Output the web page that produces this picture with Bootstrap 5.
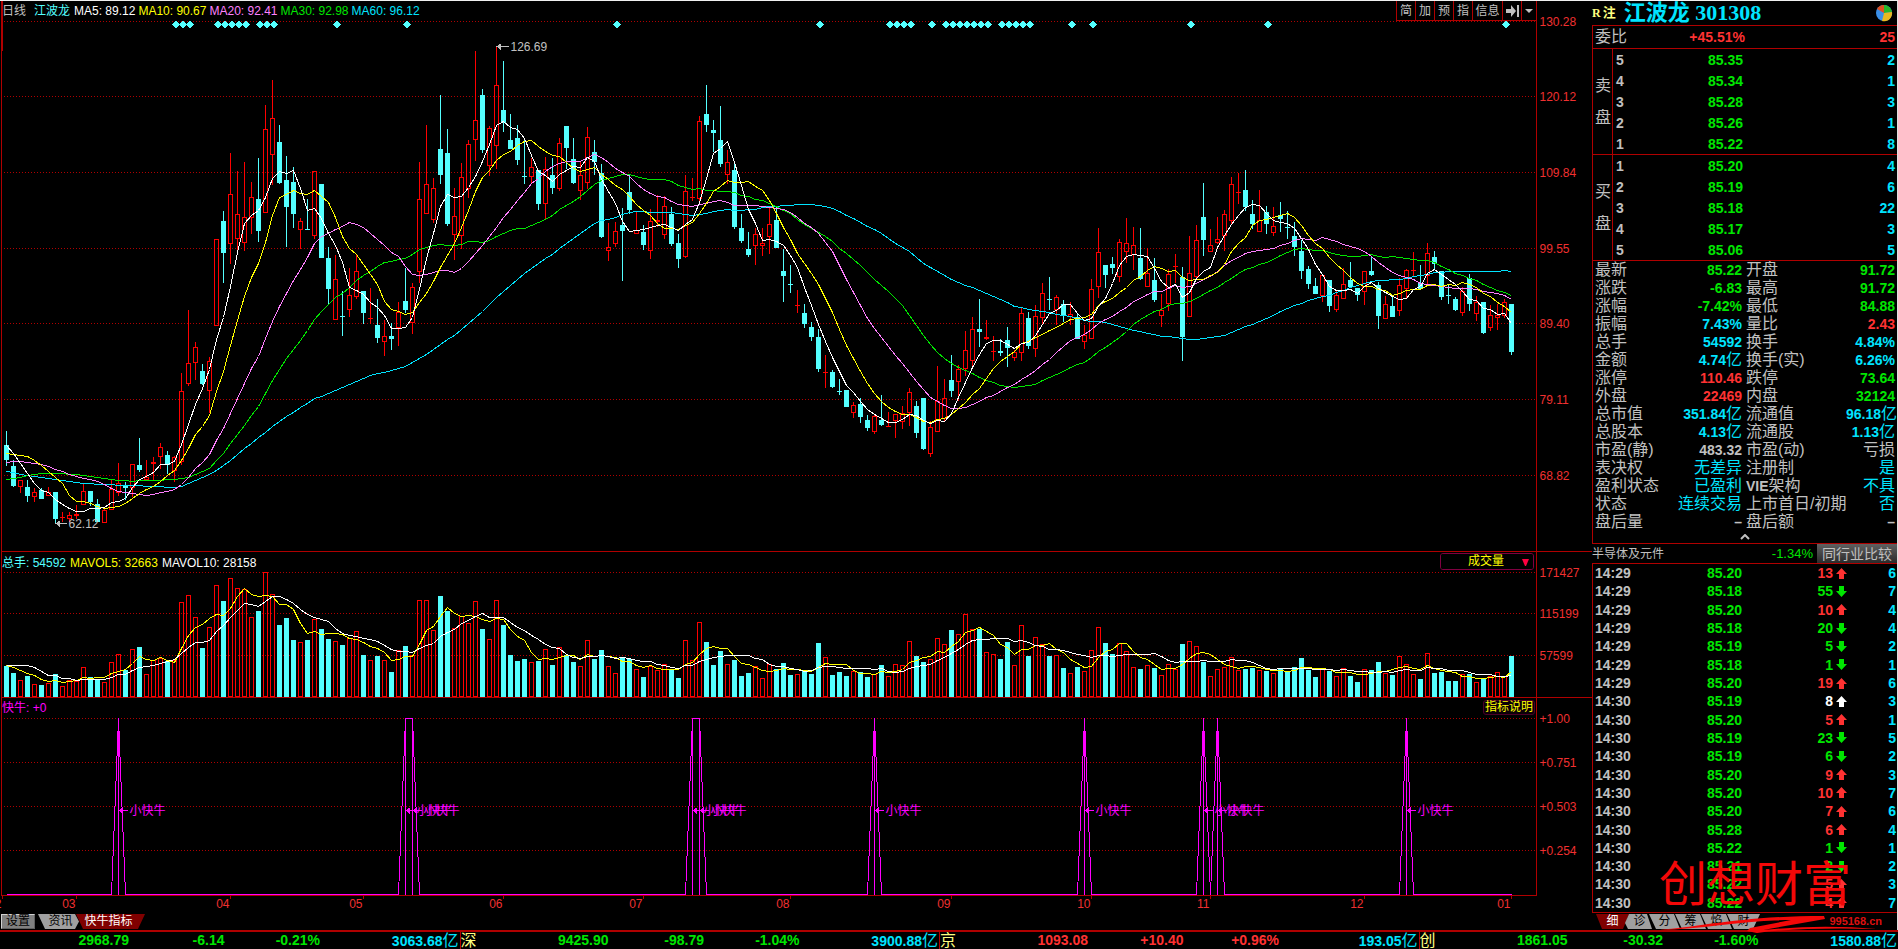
<!DOCTYPE html>
<html lang="zh-CN">
<head>
<meta charset="utf-8">
<meta name="viewport" content="width=device-width, initial-scale=1">
<title>江波龙 301308</title>
<link href="https://cdn.jsdelivr.net/npm/bootstrap@5.3.0/dist/css/bootstrap.min.css" rel="stylesheet">
<style>
:root{--line:#b00000;--up:#ff3232;--dn:#00e600;--cy:#00e4ff;--aqua:#54ffff;--gr:#c0c0c0;--mg:#ff00ff}
body{background:#000;color:var(--gr);font-family:"Liberation Sans","Noto Sans CJK SC",sans-serif;font-size:12px;line-height:16px}
.app{border-top:1px solid #f0f0f0}
.up{color:var(--up)}.dn{color:var(--dn)}.cy{color:var(--cy)}.aqua{color:var(--aqua)}.gr{color:var(--gr)}.wh{color:#fff}.yl{color:#ff0}.pk{color:#ff80ff}.mg{color:var(--mg)}
.charts{border-left:1px solid #000}
.panes{border-left:1px solid var(--line)}
.red-mark{width:2px;height:50px;background:var(--line);left:0;top:0}
.pane-head{margin-right:55px;border-right:1px solid var(--line);flex-shrink:0}
.head-price{height:20px}.head-vol{height:18px}.head-ind{height:16px}
.legend-row{gap:4px;white-space:nowrap}
.head-price .legend-row{gap:3px}
.head-price .gr{margin-right:5px}.head-price .aqua{margin-right:1px}
.head-vol .legend-row,.head-ind .legend-row{padding-top:3px}
.tool-row{height:20px;border-left:1px solid var(--line);border-bottom:1px solid var(--line)}
.tool-row button{width:19px;padding:0;border:0;border-right:1px solid var(--line);background:#000;color:var(--gr);font-size:12px;line-height:18px}
.tool-row button.wide{width:30px}
.tool-row button:last-child{width:14px;border-right:0}
.plot{min-height:0;flex-basis:0}
.plot.p1{flex-grow:531}.plot.p2{flex-grow:128}.plot.p3{flex-grow:182}
.plot svg,.time-axis svg{display:block;width:100%;height:100%;overflow:visible}
.time-axis{height:18px}
svg text{font-size:12px}
.vol-pick{width:94px;height:17px;border:1px solid #800040;border-radius:3px;margin-right:2px;margin-top:1px}
.vol-pick select{display:block;appearance:none;width:100%;height:15px;border:0;border-radius:2px;background:#000;color:#ff0;font-size:12px;line-height:15px;padding:0 0 0 27px;outline:0}
.vol-pick svg{position:absolute;right:4px;top:5px}
.note-btn{border:1px solid #4a0028;border-radius:3px;background:#0c0008;color:#ff0;padding:0 1px;font-size:12px;line-height:13px;height:15px;margin:2px 1px 0 0}
.tab-row{height:16px}
.tab-row button{border:0;padding:0;font-size:12px;line-height:15px;height:15px;background:#a0a0a0;color:#000}
.tab-row .set{width:34px;background:#808080;border:1px solid #d0d0d0;border-right-color:#606060;border-bottom-color:#606060;line-height:13px;margin-right:3px}
.tab-row .news{width:41px;padding-left:4px;clip-path:polygon(0 0,37px 0,41px 50%,37px 100%,7px 100%)}
.tab-row .bull{width:69px;background:#800000;color:#fff;margin-left:-3px;padding-right:4px;clip-path:polygon(0 0,100% 0,62px 100%,7px 100%)}
.side{width:306px;border-right:1px solid #e0e0e0}
.title-row{height:24px}
.stock-name{font:bold 22px/24px "Liberation Serif","Noto Sans CJK SC",serif;color:#00e4ff;margin-left:8px}
.flag-r{font:bold 12px/24px "Liberation Serif",serif;color:#ffff80}
.flag-z{font-size:13px;font-weight:700;color:#ffff80;margin-left:2px}
.frame{border:1px solid var(--line);border-right:0}
.num{font-size:14px;font-weight:700}
.lbl{font-size:16px;font-weight:400}
.side table{table-layout:fixed}
.bid-ratio{height:23px;border-bottom:1px solid var(--line);padding:0 2px}
.bid-ratio span:nth-child(2){width:118px}
.book{border-bottom:1px solid var(--line)}
.book .who{width:20px;flex-shrink:0;border-right:1px solid var(--line);font-size:16px;line-height:32px;padding-left:2px}
.book table td{height:21px;padding:0;line-height:16px}
.book td:nth-child(1){padding-left:3px;width:20px}.book td:nth-child(2){width:110px}.book td:nth-child(3){padding-right:2px}
.quote td{height:18px;line-height:18px;padding:0;white-space:nowrap}
.quote td:nth-child(1){padding-left:2px;width:74px}.quote td:nth-child(2){width:75px}.quote td:nth-child(3){padding-left:4px;width:104px}.quote td:nth-child(4){padding-right:2px}
.fold{height:12px;border:0;background:none;padding:0}
.sector{height:19px}
.sector .rate{font-size:13px}
.sector button{width:80px;height:20px;border:0;padding:0;background:linear-gradient(#606060,#282828);color:var(--gr);font-size:14px;line-height:18px;margin-left:4px}
.ticks{flex:1 1 0;min-height:0}
.ticks td{padding:0;line-height:16px}
.ticks td:nth-child(1){padding-left:2px;width:70px}.ticks td:nth-child(2){width:79px}.ticks td:nth-child(3){width:91px}.ticks td:nth-child(4){padding:0 0 0 3px;width:20px}.ticks td:nth-child(5){padding-right:1px}
.ticks svg{display:block}
.side-tabs{height:17px;padding:1px 0 0 4px}
.side-tabs button{width:31px;margin-right:-5px;clip-path:polygon(0 0,25px 0,100% 100%,7px 100%)}
.side-tabs button.on{width:33px;margin-right:-4px;background:#800000;color:#fff;clip-path:polygon(0 0,100% 0,27px 100%,6px 100%)}
.side-tabs button.first{width:29px;clip-path:polygon(4px 0,22px 0,27px 100%,3px 100%,0 60%)}
.side-tabs button.last{width:33px;clip-path:polygon(0 0,100% 0,26px 100%,7px 100%)}
.brand{right:0;bottom:-3px;width:246px;height:78px;pointer-events:none}
.brand-name{font-size:48px;line-height:60px;color:#f40808;font-weight:400;padding-left:8px;white-space:nowrap}
.brand-swash{left:0;bottom:0;width:240px;height:18px}
.brand-site{right:15px;bottom:4px;font-size:11px;font-weight:700;color:#dc1010}
.ticker{border-top:2px solid var(--line);height:19px;margin-left:-19px;overflow:hidden}
.ticker>div{display:grid;grid-template-columns:31% 20% 20% 29%;flex:1 1 0;border-right:1px solid var(--line);padding-right:1px;line-height:17px;text-align:right;white-space:nowrap}
.ticker>div:last-child{border-right:0}
.ticker .mk{color:#ffff80;font-size:16px}
</style>
</head>
<body class="overflow-hidden">
<div class="app d-flex flex-column vh-100 overflow-hidden">
  <main class="d-flex flex-grow-1">
    <section class="charts d-flex flex-column flex-grow-1 position-relative">
      <div class="red-mark position-absolute"></div>
      <div class="panes d-flex flex-column flex-grow-1">
        <header class="pane-head head-price d-flex justify-content-between">
          <div class="legend-row d-flex align-items-center">
            <span class="gr">日线</span><span class="aqua">江波龙</span><span class="wh">MA5: 89.12</span><span class="yl">MA10: 90.67</span><span class="pk">MA20: 92.41</span><span class="dn">MA30: 92.98</span><span class="cy">MA60: 96.12</span>
          </div>
          <div class="tool-row d-flex">
            <button>简</button><button>加</button><button>预</button><button>指</button><button class="wide">信息</button>
            <button aria-label="下一个"><svg width="13" height="12" viewBox="0 0 13 12"><path d="M0 4h5V0l5 6-5 6V8H0zM11 0h2v12h-2z" fill="#c0c0c0"/></svg></button>
            <button aria-label="更多"><svg width="8" height="4" viewBox="0 0 8 4"><path d="M0 0h8L4 4z" fill="#c0c0c0"/></svg></button>
          </div>
        </header>
        <div class="plot p1"><svg id="price"></svg></div>
        <header class="pane-head head-vol d-flex justify-content-between">
          <div class="legend-row d-flex align-items-center"><span class="aqua">总手: 54592</span><span class="yl">MAVOL5: 32663</span><span class="wh">MAVOL10: 28158</span></div>
          <div class="vol-pick position-relative"><select aria-label="指标"><option>成交量</option></select><svg width="7" height="7" viewBox="0 0 7 7"><path d="M0 0h7L4 7H3z" fill="#ff0040"/></svg></div>
        </header>
        <div class="plot p2"><svg id="volume"></svg></div>
        <header class="pane-head head-ind d-flex justify-content-between">
          <div class="legend-row d-flex align-items-center mg">快牛: +0</div>
          <button class="note-btn">指标说明</button>
        </header>
        <div class="plot p3"><svg id="signal"></svg></div>
      </div>
      <div class="time-axis"><svg id="months"></svg></div>
      <nav class="tab-row d-flex"><button class="set">设置</button><button class="news">资讯</button><button class="bull">快牛指标</button></nav>
    </section>

    <aside class="side d-flex flex-column flex-shrink-0 position-relative">
      <div class="title-row d-flex align-items-center">
        <span class="flag-r">R</span><span class="flag-z">注</span><span class="stock-name flex-grow-1">江波龙 301308</span>
        <svg width="18" height="18" viewBox="0 0 18 18" class="me-1"><circle cx="9" cy="9" r="8" fill="#3a8fe8"/><path d="M9 9V1A8 8 0 0 1 17 8z" fill="#28b828"/><path d="M9 9 17 8A8 8 0 0 1 7 17z" fill="#e8b820"/><path d="M9 9 2 5A8 8 0 0 1 9 1z" fill="#e05020"/></svg>
      </div>
      <div class="frame">
        <div class="bid-ratio d-flex align-items-center"><span class="lbl">委比</span><span class="num up text-end">+45.51%</span><span class="num up ms-auto">25</span></div>
        <div class="book d-flex"><div class="who d-flex align-items-center">卖<br>盘</div><table class="flex-grow-1 num"><tbody id="asks"></tbody></table></div>
        <div class="book d-flex"><div class="who d-flex align-items-center">买<br>盘</div><table class="flex-grow-1 num"><tbody id="bids"></tbody></table></div>
        <table class="quote w-100 num"><tbody id="quote"></tbody></table>
        <button class="fold d-flex w-100 justify-content-center align-items-center" aria-label="收起"><svg width="10" height="6" viewBox="0 0 10 6"><path d="M1 5 5 1l4 4" fill="none" stroke="#c0c0c0" stroke-width="2"/></svg></button>
      </div>
      <div class="sector d-flex align-items-center"><span>半导体及元件</span><span class="rate dn ms-auto">-1.34%</span><button>同行业比较</button></div>
      <div class="ticks frame"><table class="w-100 h-100 num"><tbody id="ticks"></tbody></table></div>
      <nav class="tab-row side-tabs d-flex"><button class="on">细</button><button class="first">诊</button><button>分</button><button>筹</button><button>焰</button><button class="last">财</button></nav>
      <div class="brand position-absolute">
        <div class="brand-name">创想财富</div>
        <svg class="brand-swash position-absolute" viewBox="0 0 240 18"><path d="M8 15C50 12 90 1 173 1L174 4 112 15Q170 9 226 14 150 12 106 18L96 16 99 13 140 5C90 5 55 14 8 15z" fill="#f40808"/></svg>
        <span class="brand-site position-absolute">995168.cn</span>
      </div>
    </aside>
  </main>
  <footer class="ticker d-flex num" id="ticker"></footer>
</div>

<script src="https://cdn.jsdelivr.net/npm/bootstrap@5.3.0/dist/js/bootstrap.bundle.min.js"></script>
<script>
// One daily bar per entry: direction, then high, body top, body bottom, low.
const BARS = `c1229,1269,1311,1329 c1312,1329,1386,1388 r1371,1371,1388,1406 c1369,1388,1413,1431 r1392,1404,1416,1431 c1392,1397,1422,1424 r1388,1404,1413,1413 c1403,1403,1480,1493 r1460,1475,1475,1488 r1460,1469,1478,1487
r1440,1466,1470,1480 r1381,1402,1438,1438 c1400,1400,1430,1443 c1424,1437,1488,1488 r1445,1455,1490,1490 r1367,1395,1452,1455 r1320,1378,1404,1415 c1375,1384,1391,1426 r1324,1324,1389,1417 c1249,1326,1340,1347
r1310,1361,1367,1370 r1303,1318,1322,1368 r1264,1277,1302,1338 c1287,1297,1325,1350 r1300,1304,1342,1373 r1064,1115,1316,1326 r884,1036,1094,1100 r976,990,1033,1082 c1038,1058,1095,1098 r1019,1032,1113,1177
r682,682,928,928 c602,630,721,807 r437,554,694,752 r488,611,681,728 r462,620,691,716 r519,562,619,668 c450,567,659,690 r299,370,605,605 r228,338,440,528 c356,405,522,525
c445,513,590,704 c477,519,610,650 r622,631,655,710 c567,652,652,652 r488,488,672,682 c525,525,736,736 c704,736,824,866 r728,796,910,910 c830,902,902,958 r765,842,883,904
r728,773,845,852 c830,830,892,924 r821,907,907,924 c852,927,964,978 r911,959,973,1015 c920,958,966,998 r861,891,934,986 c765,858,884,892 r807,819,920,952 r462,568,774,807
r356,526,608,608 r508,537,625,635 c271,425,499,525 c368,436,639,643 r536,617,668,741 r465,506,671,710 r400,411,538,564 r145,343,397,460 c254,271,428,436 r359,366,471,501
r134,243,414,482 c174,314,350,376 c325,399,425,425 c356,393,456,470 c399,503,503,525 r450,477,504,525 c485,485,582,599 r448,483,580,623 c450,499,536,552 r393,409,537,545
c359,359,422,482 c393,453,522,525 r462,500,543,570 r362,392,520,540 c399,433,462,499 c468,493,676,679 r637,705,714,743 r633,660,694,703 c593,641,659,801 c499,547,599,610
r602,657,665,665 c641,661,698,713 r597,631,714,738 r556,628,632,646 r559,588,668,681 c590,609,696,700 c667,693,738,764 r499,546,731,736 r508,563,563,573 r331,346,566,575
c242,325,356,376 c342,371,379,433 c302,399,468,476 r428,463,497,525 c460,485,647,653 c610,650,687,693 c661,710,727,733 r650,668,699,755 r650,694,699,730 r593,640,674,724
c588,627,707,707 c710,773,787,861 c755,811,811,835 r827,871,871,892 c867,892,924,935 c918,932,961,972 c937,961,1052,1060 r1012,1062,1062,1106 c1055,1061,1103,1106 c1080,1116,1116,1126
c1112,1112,1160,1160 r1147,1156,1176,1192 c1135,1152,1189,1206 c1183,1197,1220,1228 r1183,1187,1230,1237 c1126,1197,1212,1214 r1175,1215,1215,1215 r1180,1182,1198,1249 r1158,1180,1201,1223 r1106,1118,1176,1214
c1143,1157,1234,1249 c1135,1135,1280,1283 r1200,1218,1292,1303 r1043,1144,1230,1230 r1080,1136,1194,1203 c1012,1083,1115,1132 r1041,1053,1087,1143 r944,999,1050,1072 r904,939,1027,1043 c852,938,947,989
r912,961,965,970 r958,1002,1002,1029 c966,1001,1006,1015 c932,969,992,1046 r998,1005,1020,1029 r878,893,1004,1029 c889,907,986,994 r870,902,993,1018 r807,836,906,924 c790,853,853,884
r841,848,882,926 c855,867,900,918 r861,898,902,926 c892,904,966,966 r927,956,973,994 r795,825,964,964 r650,719,817,850 c755,755,784,821 c733,753,764,781 r680,691,788,803
r621,694,717,749 r647,699,725,770 c650,736,795,797 r708,779,816,816 c736,798,855,861 r838,885,899,932 r767,782,865,887 r724,759,759,807 c761,790,961,1029 r673,779,902,902
r642,685,788,798 c522,619,684,730 r653,699,716,716 r619,682,692,696 r600,611,671,716 r505,526,629,640 r493,548,548,582 c485,542,590,601 c570,610,639,653 r542,628,660,660
c587,604,639,667 r590,645,662,673 c576,614,624,661 c602,648,648,681 c633,673,704,730 c684,716,773,795 c758,767,810,824 c793,815,838,838 r785,785,842,861 c798,798,872,889
r829,842,882,889 r764,811,850,850 c747,798,819,821 c821,821,841,858 r773,773,830,870 c730,773,784,787 c803,813,901,938 r844,868,908,908 c844,872,904,904 r793,813,885,901
r767,770,822,851 r718,771,771,787 c755,807,823,825 r693,722,785,813 c716,733,754,770 c773,773,847,855 c811,842,842,867 c847,852,884,887 r818,830,891,901 c781,793,867,887
r845,862,893,915 c861,861,949,952 r870,899,933,944 r868,899,905,941 r852,862,899,908 c867,867,1004,1012`.trim().split(/\s+/).map(s => [s[0], ...s.slice(1).split(',').map(Number)]);

const VOLS = `378 399 421 408 433 435 430 402 439 420 423 382 411 422 427 367 343 390 328 321 403 361 354 363 360 187 166 232 324 262 136 183 115 145 148 232 213 97 163 255
234 300 307 300 238 267 297 304 315 295 274 345 361 348 361 396 331 318 346 181 181 271 168 213 265 229 250 184 267 298 181 255 345 363 357 367 363 328 375 322
346 366 379 301 357 330 379 400 352 357 388 411 378 391 373 388 414 301 361 247 306 375 333 373 360 408 399 379 415 372 388 369 405 403 393 402 309 352 405 396
408 394 396 411 402 375 409 373 376 304 348 366 358 295 313 270 283 223 268 267 337 343 357 306 376 256 348 292 313 348 346 384 400 381 394 331 262 309 342 310
334 382 387 376 384 406 373 388 312 304 319 366 409 388 382 352 391 387 384 391 393 400 387 394 381 354 390 411 388 393 409 385 408 426 388 390 366 400 405 349
373 403 417 340 399 396 423 423 402 402 427 417 408 397 408 348`.trim().split(/\s+/).map(Number);

const CLOSES = BARS.map(b => b[0] === 'r' ? b[2] : b[3]);
const MARKS = [24,25,26,30,31,32,33,34,36,37,38,47,57,87,116,126,127,128,129,132,134,135,136,137,138,139,140,142,143,144,145,146,152,155,169,180,214];
const SIGNALS = [16,57,58,98,99,124,154,171,173,200];
const MONTHS = [['02',0],['03',10],['04',32],['05',51],['06',71],['07',91],['08',112],['09',135],['10',155],['11',172],['12',194],['01',215]];
const C = {line:'#b00000', red:'#ff0000', aqua:'#54ffff', text:'#f03030', gray:'#c0c0c0', mg:'#ff00ff'};

// Moving average; "lead" holds the known points before the window is full.
function average(values, n, lead) {
  const out = values.map((_, i) => i < n - 1 ? null : values.slice(i - n + 1, i + 1).reduce((a, b) => a + b) / n);
  const known = [...lead, [n - 1, out[n - 1]]];
  for (let i = 0; i < n - 1; i++) {
    const k = known.findIndex(p => p[0] > i), a = known[k - 1], b = known[k];
    out[i] = a[1] + (b[1] - a[1]) * (i - a[0]) / (b[0] - a[0]);
  }
  return out;
}
const MA = [
  ['#00e4ff', average(CLOSES, 60, [[0,1344],[2,1352],[4,1359],[8,1371],[13,1381],[18,1384],[21,1388],[24,1389],[25,1386],[27,1371],[29,1354],[31,1328],[34,1280],[38,1216],[41,1175],[44,1137],[48,1105],[52,1070],[55,1056],[57,1044]])],
  ['#00e600', average(CLOSES, 30, [[0,1368],[2,1361],[5,1349],[8,1350],[12,1358],[15,1368],[18,1372],[24,1367],[26,1360],[28,1343]])],
  ['#ff80ff', average(CLOSES, 20, [[0,1318],[2,1315],[4,1321],[6,1330],[8,1345],[10,1359],[12,1367],[14,1381],[16,1402],[18,1408]])],
  ['#ffff00', average(CLOSES, 10, [[0,1294],[3,1301],[4,1312],[8,1377]])],
  ['#ffffff', average(CLOSES, 5, [[0,1271],[1,1294],[2,1322],[3,1350]])]
];
const MAVOL = [
  ['#ffff00', average(VOLS, 5, [[0,376],[2,390],[3,400]])],
  ['#ffffff', average(VOLS, 10, [[0,376],[3,376],[4,383],[6,405],[7,406],[8,415]])]
];

function line(x1, y1, x2, y2, c, extra = '') { return `<line x1="${x1}" y1="${y1}" x2="${x2}" y2="${y2}" stroke="${c}" ${extra}/>`; }
function text(x, y, s, c, extra = '') { return `<text x="${x}" y="${y}" fill="${c}" ${extra}>${s}</text>`; }
function poly(series, X, Y, c) { return `<polyline fill="none" stroke="${c}" points="${series.map((v, i) => X(i) + ',' + (Math.floor(Y(v)) + 0.5)).join(' ')}"/>`; }
function stage(id, height) {
  const el = document.getElementById(id), w = el.clientWidth, h = el.clientHeight;
  const axis = w - 55.5, sx = axis / 1534.5, sy = h / height;
  return {el, w, h, axis, sy, X: i => Math.floor((7 * i + 4.5) * sx) + 0.5};
}
function grid(s, rows) {
  return rows.map(([y, label]) => {
    const yy = Math.floor(y * s.sy) + 0.5;
    return line(2, yy, s.axis - 1, yy, C.line, 'stroke-dasharray="1 2"') + text(s.axis + 3, yy + 4, label, C.text);
  }).join('') + line(s.axis, 0, s.axis, s.h, C.line);
}
function tag(x, y, label, c, gap) {
  return line(x + 1, y, x + gap - 2, y, c) + `<path d="M${x} ${y}l4-3v6z" fill="${c}"/>` + text(x + gap, y + 4, label, c);
}
function drawPrice() {
  const s = stage('price', 531), Y = v => (v * 550 / 1568 - 21) * s.sy;
  let o = grid(s, [[0,'130.28'],[75,'120.12'],[151,'109.84'],[227,'99.55'],[302,'89.40'],[378,'79.11'],[454,'68.82']]);
  for (const i of MARKS) o += `<path d="M${s.X(i) - 3} 3.5l4-4 4 4-4 4z" fill="${C.aqua}"/>`;
  BARS.forEach(([t, hi, top, bot, lo], i) => {
    const x = s.X(i), [a, b, c, d] = [hi, top, bot, lo].map(v => Math.round(Y(v)));
    if (t === 'c') {
      o += line(x, a, x, Math.max(d, a + 1), C.aqua) + `<rect x="${x - 2.5}" y="${b}" width="5" height="${Math.max(1, c - b)}" fill="${C.aqua}"/>`;
    } else {
      const p = Math.floor(Y(top)) + 0.5, q = Math.floor(Y(bot)) + 0.5;
      if (p > a) o += line(x, a, x, p, C.red);
      if (d > q) o += line(x, q, x, d, C.red);
      o += q > p ? `<rect x="${x - 2}" y="${p}" width="4" height="${q - p}" fill="none" stroke="${C.red}"/>` : line(x - 2.5, p, x + 2.5, p, C.red);
    }
  });
  for (const [c, v] of MA) o += poly(v, s.X, Y, c);
  o += tag(s.X(70), Math.floor(Y(133)) + 0.5, '126.69', C.gray, 14) + tag(s.X(7), Math.floor(Y(1493)) + 0.5, '62.12', C.gray, 13);
  o += line(0, s.h - 0.5, s.w, s.h - 0.5, C.line);
  s.el.innerHTML = `<g shape-rendering="crispEdges">${o}</g>`;
}
function drawVolume() {
  const s = stage('volume', 128), Y = v => (v / 3 - 30) * s.sy;
  let o = grid(s, [[2,'171427'],[43,'115199'],[85,'57599']]);
  VOLS.forEach((v, i) => {
    const x = s.X(i), y = Math.floor(Y(v)), b = Math.round(s.h) - 1;
    o += BARS[i][0] === 'c' ? `<rect x="${x - 2.5}" y="${y}" width="5" height="${b - y}" fill="${C.aqua}"/>` : `<rect x="${x - 2}" y="${y + 0.5}" width="4" height="${b - y - 1}" fill="none" stroke="${C.red}"/>`;
  });
  for (const [c, v] of MAVOL) o += poly(v, s.X, Y, c);
  o += line(0, s.h - 0.5, s.w, s.h - 0.5, C.line);
  s.el.innerHTML = `<g shape-rendering="crispEdges">${o}</g>`;
}
function drawSignal() {
  const s = stage('signal', 182), top = Math.round(4 * s.sy) + 0.5, base = s.h - 1.5;
  let o = grid(s, [[4,'+1.00'],[48,'+0.751'],[92,'+0.503'],[136,'+0.254']]);
  o += line(0, s.h - 0.5, s.axis, s.h - 0.5, C.line);
  o += `<polyline fill="none" stroke="${C.mg}" points="${BARS.map((_, i) => s.X(i) + ',' + (SIGNALS.includes(i) ? top : base)).join(' ')}"/>`;
  for (const i of SIGNALS) o += line(s.X(i), top, s.X(i), base, C.mg) + tag(s.X(i), Math.floor(96 * s.sy) + 0.5, '小快牛', C.mg, 11);
  s.el.innerHTML = `<g shape-rendering="crispEdges">${o}</g>`;
}
function drawMonths() {
  const el = document.getElementById('months'), sx = (el.clientWidth - 56.5) / 1534.5;
  el.innerHTML = MONTHS.map(([m, i]) => {
    const x = i ? Math.floor((7 * i + 5.5) * sx) + 0.5 : 1.5;
    return line(x, 0, x, 3, C.line) + text(x - 1, 12, m, C.text, 'text-anchor="end"');
  }).join('');
}
function draw() { drawPrice(); drawVolume(); drawSignal(); drawMonths(); }
draw();
addEventListener('resize', draw);

const fill = (id, html) => document.getElementById(id).innerHTML = html;
const han = s => s.replace(/[\u4e00-\u9fff()\/]+/g, m => `<span class="lbl">${m}</span>`);
const book = rows => rows.map(([n, p, v]) => `<tr><td>${n}</td><td class="dn text-end">${p}</td><td class="cy text-end">${v}</td></tr>`).join('');
fill('asks', book([[5,'85.35',2],[4,'85.34',1],[3,'85.28',3],[2,'85.26',1],[1,'85.22',8]]));
fill('bids', book([[1,'85.20',4],[2,'85.19',6],[3,'85.18',22],[4,'85.17',3],[5,'85.06',5]]));
fill('quote', [
  ['最新','85.22','dn','开盘','91.72','dn'],['涨跌','-6.83','dn','最高','91.72','dn'],['涨幅','-7.42%','dn','最低','84.88','dn'],
  ['振幅','7.43%','cy','量比','2.43','up'],['总手','54592','cy','换手','4.84%','cy'],['金额','4.74亿','cy','换手(实)','6.26%','cy'],
  ['涨停','110.46','up','跌停','73.64','dn'],['外盘','22469','up','内盘','32124','dn'],['总市值','351.84亿','cy','流通值','96.18亿','cy'],
  ['总股本','4.13亿','cy','流通股','1.13亿','cy'],['市盈(静)','483.32','gr','市盈(动)','亏损','gr'],['表决权','无差异','cy','注册制','是','cy'],
  ['盈利状态','已盈利','cy','VIE架构','不具','cy'],['状态','连续交易','cy','上市首日/初期','否','cy'],['盘后量','–','gr','盘后额','–','gr']
].map(r => `<tr><td>${han(r[0])}</td><td class="text-end ${r[2]}">${han(r[1])}</td><td>${han(r[3])}</td><td class="text-end ${r[5]}">${han(r[4])}</td></tr>`).join(''));

const ARROW = {u:'M5.5 0 11 6H8v5H3V6H0z', d:'M5.5 11 0 5h3V0h5v5h3z'};
fill('ticks', `29 20 13 u 6|29 18 55 d 7|29 20 10 u 4|29 18 20 d 4|29 19 5 d 2|29 18 1 d 1|29 20 19 u 6|30 19 8 w 3|30 20 5 u 1|30 19 23 d 5|30 19 6 d 2|30 20 9 u 3|30 20 10 u 7|30 20 7 u 6|30 28 6 u 4|30 22 1 d 1|30 21 2 d 2|30 22 5 u 3|30 22 4 u 7`.split('|').map(r => {
  const [m, p, v, k, n] = r.split(' '), cls = {u:'up', d:'dn', w:'wh'}[k];
  return `<tr><td>14:${m}</td><td class="dn text-end">85.${p}</td><td class="${cls} text-end">${v}</td><td class="${cls}"><svg width="11" height="11" viewBox="0 0 11 11"><path fill="currentColor" d="${ARROW[k === 'd' ? 'd' : 'u']}"/></svg></td><td class="cy text-end">${n}</td></tr>`;
}).join(''));

fill('ticker', [['','2968.79','-6.14','-0.21%','3063.68亿','dn'],['深','9425.90','-98.79','-1.04%','3900.88亿','dn'],['京','1093.08','+10.40','+0.96%','193.05亿','up'],['创','1861.05','-30.32','-1.60%','1580.88亿','dn']]
  .map(([m, a, b, c, d, k]) => `<div class="${k}"><span class="d-flex justify-content-between"><span class="mk fw-normal">${m}</span>${a}</span><span>${b}</span><span>${c}</span><span class="cy">${han(d)}</span></div>`).join(''));
</script>
</body>
</html>
